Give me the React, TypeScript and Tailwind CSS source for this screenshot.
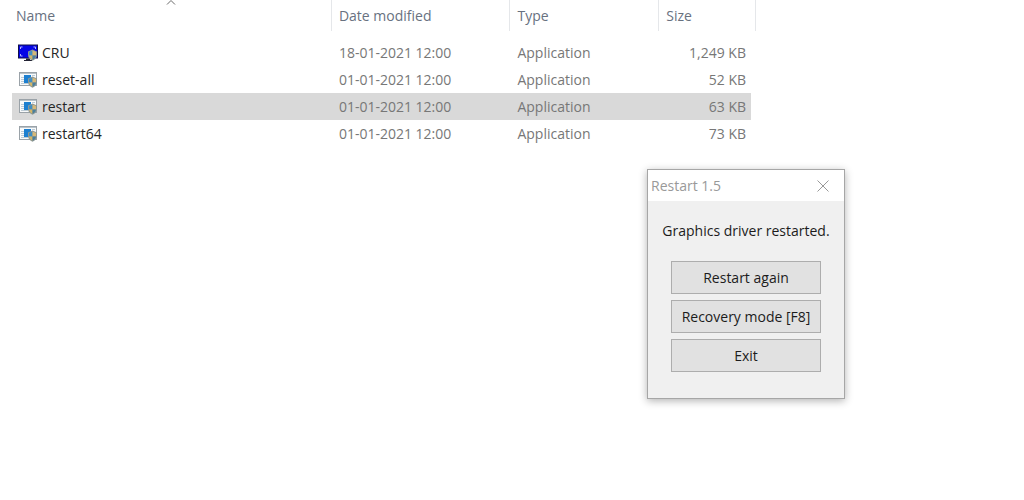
import { clsx } from "clsx";

type FileEntry = {
  name: string;
  modified: string;
  type: string;
  size: string;
  icon: "monitor" | "program";
  selected?: boolean;
};

const files: FileEntry[] = [
  { name: "CRU", modified: "18-01-2021 12:00", type: "Application", size: "1,249 KB", icon: "monitor" },
  { name: "reset-all", modified: "01-01-2021 12:00", type: "Application", size: "52 KB", icon: "program" },
  { name: "restart", modified: "01-01-2021 12:00", type: "Application", size: "63 KB", icon: "program", selected: true },
  { name: "restart64", modified: "01-01-2021 12:00", type: "Application", size: "73 KB", icon: "program" },
];

const actions = ["Restart again", "Recovery mode [F8]", "Exit"];

function Shield() {
  return (
    <g>
      <path d="M14.500 5.500 10 7.500v3.500c0 3 2 4.700 4.500 5.700 2.500-1 4.500-2.700 4.500-5.700V7.500z" fill="#8d9795" />
      <path d="M14.500 6.500 11 8v3.500h3.500z" fill="#3f8ec4" />
      <path d="M14.500 6.500 18 8v3.500h-3.500z" fill="#d6b878" />
      <path d="M11 11.500h3.500v4.200c-2-.9-3.300-2.200-3.500-4.200z" fill="#d3b667" />
      <path d="M18 11.500h-3.500v4.200c2-.9 3.300-2.200 3.500-4.200z" fill="#4a7f9c" />
    </g>
  );
}

function MonitorIcon() {
  return (
    <svg viewBox="0 0 20 17" className="h-[17px] w-5 shrink-0" aria-hidden="true">
      <rect width="20" height="14" y="0.500" fill="#10104a" />
      <rect x="1" y="1.500" width="18" height="12" fill="#0505e6" />
      <path d="M2.500 5V3h2M15.500 3h2v2M2.500 10v2h2" fill="none" stroke="#b4b4ff" />
      <path d="M8 14.500h4V16h2v1H6v-1h2z" fill="#222233" />
      <Shield />
    </svg>
  );
}

function ProgramIcon() {
  return (
    <svg viewBox="0 0 20 17" className="h-[17px] w-5 shrink-0" aria-hidden="true">
      <rect x="1.500" y="1.500" width="17" height="13" fill="#f8fafb" stroke="#9aa2a8" />
      <path d="M2 2.500h16" stroke="#b9c3ca" />
      <path d="M3 6.500h3M3 8.500h3M3 10.500h3M3 12.500h7M14 4.500h3" stroke="#bccbd6" />
      <path d="M6 4h7v3l-2 1v4H6z" fill="#1c7fd0" />
      <Shield />
    </svg>
  );
}

function FileTable() {
  const headCell = "h-[31px] border-r border-[#e5e7ea] p-0 pl-[7px] text-left font-normal";

  return (
    <table className="w-full max-w-[744px] table-fixed border-separate border-spacing-0 leading-5">
      <colgroup>
        <col className="w-[43%]" />
        <col className="w-[24%]" />
        <col className="w-[20%]" />
        <col className="w-[13%]" />
      </colgroup>
      <thead className="text-[#68717f]">
        <tr>
          <th className="relative h-[31px] border-r border-[#e5e7ea] p-0 pl-1 text-left font-normal" aria-sort="ascending">
            Name
            <svg viewBox="0 0 10 6" className="absolute inset-x-0 top-0 mx-auto h-1.5 w-2.5" aria-hidden="true">
              <path d="M1 4.500 5 .5l4 4" fill="none" stroke="#6b6b6b" />
            </svg>
          </th>
          <th className={headCell}>Date modified</th>
          <th className={headCell}>Type</th>
          <th className={headCell}>Size</th>
        </tr>
      </thead>
      <tbody className="text-[#777777] before:block before:h-2">
        {files.map((file) => {
          const fill = clsx("flex h-[27px] items-center", file.selected && "bg-[#d9d9d9]");
          return (
            <tr key={file.name} aria-selected={file.selected}>
              <td className="p-0">
                <div className={clsx(fill, "gap-1 pl-1.5 text-[#252525]")}>
                  {file.icon === "monitor" ? <MonitorIcon /> : <ProgramIcon />}
                  {file.name}
                </div>
              </td>
              <td className="p-0">
                <div className={clsx(fill, "pl-[7px]")}>{file.modified}</div>
              </td>
              <td className="p-0">
                <div className={clsx(fill, "pl-[7px]")}>{file.type}</div>
              </td>
              <td className="p-0">
                <div className={clsx(fill, "mr-[5px] justify-end pr-[5px]")}>{file.size}</div>
              </td>
            </tr>
          );
        })}
      </tbody>
    </table>
  );
}

function RestartDialog() {
  return (
    <section
      role="dialog"
      aria-labelledby="dialog-title"
      className="absolute top-[169px] left-[647px] w-[198px] border border-[#a6a6a6] bg-[#f0f0f0] pb-[26px] shadow-[0_2px_8px_rgba(0,0,0,0.3)]"
    >
      <header className="flex h-[31px] items-center justify-between bg-white pr-3.5 pl-[3px]">
        <h1 id="dialog-title" className="text-[#999999]">
          Restart 1.5
        </h1>
        <button type="button" aria-label="Close">
          <svg viewBox="0 0 14 14" className="size-3.5" aria-hidden="true">
            <path d="M1.500 1.500l11 11M12.500 1.500l-11 11" fill="none" stroke="#999999" />
          </svg>
        </button>
      </header>
      <p className="mt-5 text-center whitespace-nowrap text-[#1c1c1c]">Graphics driver restarted.</p>
      <div className="mx-[23px] mt-5 flex flex-col gap-1.5">
        {actions.map((label) => (
          <button
            key={label}
            type="button"
            className="h-[33px] border border-[#adadad] bg-[#e1e1e1] whitespace-nowrap text-[#1c1c1c]"
          >
            {label}
          </button>
        ))}
      </div>
    </section>
  );
}

export default function App() {
  return (
    <main className="relative min-h-screen bg-white px-3 font-['Open_Sans','Noto_Sans',sans-serif] text-sm">
      <FileTable />
      <RestartDialog />
    </main>
  );
}
